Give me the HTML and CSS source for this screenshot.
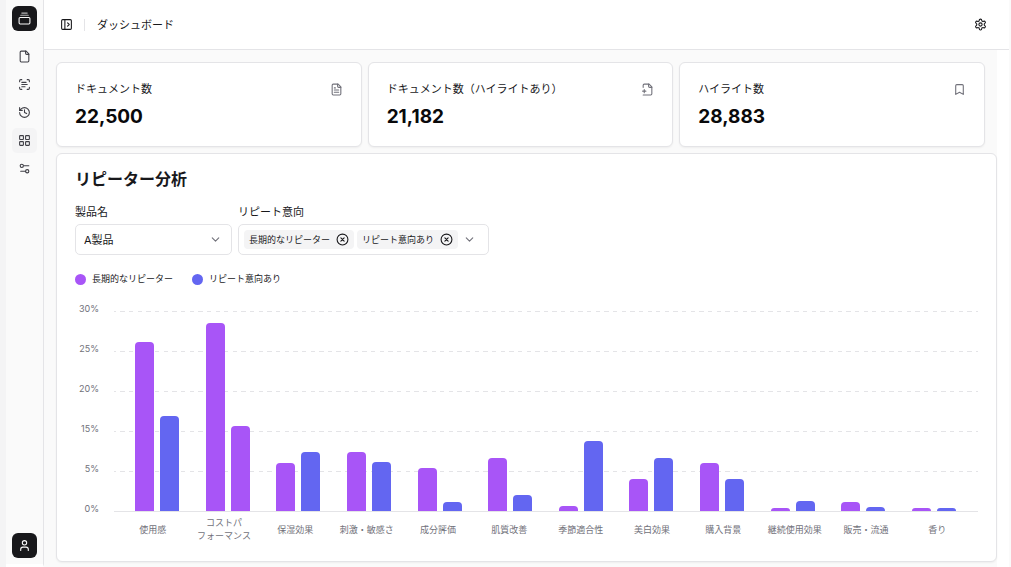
FILE: index.html
```html
<!DOCTYPE html>
<html lang="ja">
<head>
<meta charset="utf-8">
<title>ダッシュボード</title>
<link rel="stylesheet" href="styles.css">
</head>
<body>
<div class="app">
  <aside class="sidebar">
    <a class="tile" href="#" aria-label="ホーム"><svg class="icon" viewBox="0 0 24 24"><path opacity=".7" d="M7 2h10M5 6h14"/><rect x="2" y="10" width="20" height="12" rx="2"/></svg></a>
    <nav class="nav" aria-label="メイン">
      <a class="nav-item" href="#" aria-label="ドキュメント"><svg class="icon" viewBox="0 0 24 24"><path d="M15 2H6a2 2 0 0 0-2 2v16a2 2 0 0 0 2 2h12a2 2 0 0 0 2-2V7Z"/><path d="M14 2v4a2 2 0 0 0 2 2h4"/></svg></a>
      <a class="nav-item" href="#" aria-label="スキャン"><svg class="icon" viewBox="0 0 24 24"><path d="M3 7V5a2 2 0 0 1 2-2h2M17 3h2a2 2 0 0 1 2 2v2M21 17v2a2 2 0 0 1-2 2h-2M7 21H5a2 2 0 0 1-2-2v-2M7 8h8M7 12h10M7 16h6"/></svg></a>
      <a class="nav-item" href="#" aria-label="履歴"><svg class="icon" viewBox="0 0 24 24"><path d="M3 12a9 9 0 1 0 9-9 9.75 9.75 0 0 0-6.74 2.74L3 8"/><path d="M3 3v5h5M12 7v5l4 2"/></svg></a>
      <a class="nav-item active" href="#" aria-label="ダッシュボード"><svg class="icon" viewBox="0 0 24 24"><rect x="3" y="3" width="7" height="7" rx="1"/><rect x="14" y="3" width="7" height="7" rx="1"/><rect x="14" y="14" width="7" height="7" rx="1"/><rect x="3" y="14" width="7" height="7" rx="1"/></svg></a>
      <a class="nav-item" href="#" aria-label="設定"><svg class="icon" viewBox="0 0 24 24"><path d="M20 7h-9M14 17H5"/><circle cx="17" cy="17" r="3"/><circle cx="7" cy="7" r="3"/></svg></a>
    </nav>
    <button class="tile" type="button" aria-label="アカウント"><svg class="icon" viewBox="0 0 24 24"><path d="M19 21v-2a4 4 0 0 0-4-4H9a4 4 0 0 0-4 4v2"/><circle cx="12" cy="7" r="4"/></svg></button>
  </aside>

  <div class="main">
    <header class="header">
      <button class="icon-button" type="button" aria-label="サイドバーを開く"><svg class="icon" viewBox="0 0 24 24"><rect x="3" y="3" width="18" height="18" rx="2"/><path d="M9 3v18M14 9l3 3-3 3"/></svg></button>
      <span class="separator"></span>
      <h1 class="page-title">ダッシュボード</h1>
      <button class="icon-button settings" type="button" aria-label="設定"><svg class="icon" viewBox="0 0 24 24"><path d="M12.22 2h-.44a2 2 0 0 0-2 2v.18a2 2 0 0 1-1 1.73l-.43.25a2 2 0 0 1-2 0l-.15-.08a2 2 0 0 0-2.73.73l-.22.38a2 2 0 0 0 .73 2.73l.15.1a2 2 0 0 1 1 1.72v.51a2 2 0 0 1-1 1.74l-.15.09a2 2 0 0 0-.73 2.73l.22.38a2 2 0 0 0 2.73.73l.15-.08a2 2 0 0 1 2 0l.43.25a2 2 0 0 1 1 1.73V20a2 2 0 0 0 2 2h.44a2 2 0 0 0 2-2v-.18a2 2 0 0 1 1-1.73l.43-.25a2 2 0 0 1 2 0l.15.08a2 2 0 0 0 2.73-.73l.22-.39a2 2 0 0 0-.73-2.73l-.15-.08a2 2 0 0 1-1-1.74v-.5a2 2 0 0 1 1-1.74l.15-.09a2 2 0 0 0 .73-2.73l-.22-.38a2 2 0 0 0-2.73-.73l-.15.08a2 2 0 0 1-2 0l-.43-.25a2 2 0 0 1-1-1.73V4a2 2 0 0 0-2-2z"/><circle cx="12" cy="12" r="3"/></svg></button>
    </header>

    <main class="content">
      <section class="stats">
        <article class="card stat">
          <div class="stat-head"><h2 class="stat-label">ドキュメント数</h2><svg class="icon muted" viewBox="0 0 24 24"><path d="M15 2H6a2 2 0 0 0-2 2v16a2 2 0 0 0 2 2h12a2 2 0 0 0 2-2V7Z"/><path d="M14 2v4a2 2 0 0 0 2 2h4M10 9H8M16 13H8M16 17H8"/></svg></div>
          <p class="stat-value">22,500</p>
        </article>
        <article class="card stat">
          <div class="stat-head"><h2 class="stat-label">ドキュメント数（ハイライトあり）</h2><svg class="icon muted" viewBox="0 0 24 24"><path d="M4 22h14a2 2 0 0 0 2-2V7l-5-5H6a2 2 0 0 0-2 2v4"/><path d="M14 2v4a2 2 0 0 0 2 2h4M3 15h6M6 12v6"/></svg></div>
          <p class="stat-value">21,182</p>
        </article>
        <article class="card stat">
          <div class="stat-head"><h2 class="stat-label">ハイライト数</h2><svg class="icon muted" viewBox="0 0 24 24"><path d="m19 21-7-4-7 4V5a2 2 0 0 1 2-2h10a2 2 0 0 1 2 2Z"/></svg></div>
          <p class="stat-value">28,883</p>
        </article>
      </section>

      <section class="card panel">
        <h2 class="panel-title">リピーター分析</h2>
        <div class="filters">
          <div class="field product">
            <label class="field-label" for="product">製品名</label>
            <div class="control">
              <select class="select" id="product"><option>A製品</option></select>
              <svg class="icon chevron" viewBox="0 0 24 24"><path d="m6 9 6 6 6-6"/></svg>
            </div>
          </div>
          <div class="field">
            <span class="field-label" id="intent">リピート意向</span>
            <div class="control tags" role="group" aria-labelledby="intent">
              <span class="tag">長期的なリピーター<button class="tag-remove" type="button" aria-label="長期的なリピーターを削除"><svg class="icon" viewBox="0 0 24 24"><circle cx="12" cy="12" r="10"/><path d="m15 9-6 6M9 9l6 6"/></svg></button></span>
              <span class="tag">リピート意向あり<button class="tag-remove" type="button" aria-label="リピート意向ありを削除"><svg class="icon" viewBox="0 0 24 24"><circle cx="12" cy="12" r="10"/><path d="m15 9-6 6M9 9l6 6"/></svg></button></span>
              <button class="open" type="button" aria-label="選択肢を開く"><svg class="icon" viewBox="0 0 24 24"><path d="m6 9 6 6 6-6"/></svg></button>
            </div>
          </div>
        </div>

        <ul class="legend">
          <li class="legend-item"><span class="dot violet"></span>長期的なリピーター</li>
          <li class="legend-item"><span class="dot indigo"></span>リピート意向あり</li>
        </ul>

        <div class="chart">
          <div class="y-axis"><span>30%</span><span>25%</span><span>20%</span><span>15%</span><span>5%</span><span>0%</span></div>
          <div class="plot">
            <div class="grid-lines"><i></i><i></i><i></i><i></i><i></i><i></i></div>
            <div class="bars">
              <div class="group"><b class="bar violet" style="height:84.5%"></b><b class="bar indigo" style="height:47.5%"></b></div>
              <div class="group"><b class="bar violet" style="height:94%"></b><b class="bar violet" style="height:42.5%"></b></div>
              <div class="group"><b class="bar violet" style="height:24%"></b><b class="bar indigo" style="height:29.5%"></b></div>
              <div class="group"><b class="bar violet" style="height:29.5%"></b><b class="bar indigo" style="height:24.5%"></b></div>
              <div class="group"><b class="bar violet" style="height:21.5%"></b><b class="bar indigo" style="height:4.5%"></b></div>
              <div class="group"><b class="bar violet" style="height:26.5%"></b><b class="bar indigo" style="height:8%"></b></div>
              <div class="group"><b class="bar violet" style="height:2.5%"></b><b class="bar indigo" style="height:35%"></b></div>
              <div class="group"><b class="bar violet" style="height:16%"></b><b class="bar indigo" style="height:26.5%"></b></div>
              <div class="group"><b class="bar violet" style="height:24%"></b><b class="bar indigo" style="height:16%"></b></div>
              <div class="group"><b class="bar violet" style="height:1.5%"></b><b class="bar indigo" style="height:5%"></b></div>
              <div class="group"><b class="bar violet" style="height:4.5%"></b><b class="bar indigo" style="height:2%"></b></div>
              <div class="group"><b class="bar violet" style="height:1.5%"></b><b class="bar indigo" style="height:1.5%"></b></div>
            </div>
          </div>
          <div class="x-axis">
            <span>使用感</span><span>コストパ<br>フォーマンス</span><span>保湿効果</span><span>刺激・敏感さ</span><span>成分評価</span><span>肌質改善</span><span>季節適合性</span><span>美白効果</span><span>購入背景</span><span>継続使用効果</span><span>販売・流通</span><span>香り</span>
          </div>
        </div>
      </section>
    </main>
  </div>
</div>
</body>
</html>
```
FILE: styles.css
```css
* { box-sizing: border-box; }

body {
  margin: 0;
  background: #fff;
  color: #18181b;
  font-family: Inter, "Noto Sans CJK JP", sans-serif;
  font-size: 11px;
  line-height: 16px;
}

h1, h2, p, ul { margin: 0; padding: 0; font-weight: 400; }
button { border: 0; padding: 0; background: none; color: inherit; font: inherit; }

.app {
  display: flex;
  min-height: 100vh;
  border-left: 6px solid #f4f4f5;
  border-right: 2px solid #fafafa;
}

.icon {
  display: block;
  flex: none;
  width: 13px;
  height: 13px;
  fill: none;
  stroke: currentColor;
  stroke-width: 2;
  stroke-linecap: round;
  stroke-linejoin: round;
}
.muted { color: #71717a; }

/* Sidebar */
.sidebar {
  display: flex;
  flex-direction: column;
  align-items: center;
  gap: 13px;
  width: 38px;
  padding: 6px 0;
  border-right: 1px solid #e4e4e7;
  border-bottom: 3px solid #fff;
  background: #fafafa;
}
.tile, .nav-item {
  display: grid;
  place-items: center;
  width: 25px;
  height: 25px;
  border-radius: 6px;
}
.tile { background: #18181b; color: #fafafa; }
.nav { display: grid; gap: 3px; margin-bottom: auto; }
.nav-item { color: #3f3f46; border-radius: 5px; }
.nav-item.active { background: #f4f4f5; }

/* Header */
.main { display: flex; flex: 1; flex-direction: column; min-width: 0; }
.header {
  display: flex;
  align-items: center;
  height: 50px;
  padding: 0 22px 0 16px;
  border-bottom: 1px solid #e4e4e7;
}
.separator { width: 1px; height: 12px; margin: 0 12px 0 11px; background: #e4e4e7; }
.page-title { font-size: 11px; }
.settings { margin-left: auto; }

/* Content */
.content {
  display: flex;
  flex: 1;
  flex-direction: column;
  gap: 6px;
  margin-right: 12px;
  padding: 12px 0 5px 12px;
  background: #fafafa;
}
.card {
  border: 1px solid #e4e4e7;
  border-radius: 6px;
  background: #fff;
  box-shadow: 0 1px 2px rgb(0 0 0 / 5%);
}
.stats {
  display: grid;
  grid-template-columns: repeat(3, 1fr);
  gap: 6px;
  padding-right: 12px;
}
.stat { padding: 18px 18px 15px; }
.stat-head { display: flex; align-items: center; justify-content: space-between; }
.stat-label { font-size: 11px; }
.stat-value {
  margin-top: 6px;
  color: #09090b;
  font-size: 19px;
  font-weight: 700;
  line-height: 28px;
}

/* Analysis panel */
.panel { flex: 1; padding: 13px 18px 16px; }
.panel-title { font-size: 16px; font-weight: 700; line-height: 24px; }
.filters { display: flex; gap: 6px; margin-top: 13px; }
.field-label { display: block; margin-bottom: 4px; }
.product { width: 157px; }
.control {
  display: grid;
  align-items: center;
  height: 31px;
  border: 1px solid #e4e4e7;
  border-radius: 5px;
}
.select {
  grid-area: 1 / 1;
  width: 100%;
  height: 100%;
  padding: 0 8px;
  border: 0;
  background: none;
  color: inherit;
  font: inherit;
  appearance: none;
}
.chevron {
  grid-area: 1 / 1;
  justify-self: end;
  margin-right: 9px;
  color: #71717a;
  pointer-events: none;
}
.tags { display: flex; gap: 3px; padding: 0 12px 0 5px; }
.tag {
  display: flex;
  align-items: center;
  gap: 6px;
  height: 19px;
  padding: 0 5px;
  border-radius: 4px;
  background: #f4f4f5;
  font-size: 9px;
}
.open { margin-left: 2px; color: #71717a; }

.legend { display: flex; gap: 19px; margin-top: 16px; list-style: none; font-size: 9px; }
.legend-item { display: flex; align-items: center; gap: 6px; }
.dot { width: 11px; height: 11px; border-radius: 50%; }
.violet { background: #a855f7; }
.indigo { background: #6366f1; }

/* Bar chart */
.chart {
  display: grid;
  grid-template-columns: 24px 1fr;
  column-gap: 15px;
  margin-top: 24px;
  color: #71717a;
  font-size: 9px;
  line-height: 13px;
}
.y-axis {
  display: flex;
  flex-direction: column;
  justify-content: space-between;
  height: 213px;
  margin: -9px 0 -4px;
  text-align: right;
}
.plot { display: grid; height: 201px; }
.grid-lines {
  grid-area: 1 / 1;
  display: flex;
  flex-direction: column;
  justify-content: space-between;
}
.grid-lines i {
  height: 1px;
  background: repeating-linear-gradient(90deg, #e4e4e7 0 0.25%, transparent 0.25% 0.75%, #e4e4e7 0.75% 1%);
}
.grid-lines i:last-child { background: #e4e4e7; }
.bars {
  grid-area: 1 / 1;
  display: flex;
  justify-content: space-between;
  height: 200px;
  padding: 0 22px 0 21px;
}
.group { display: flex; align-items: flex-end; gap: 6px; }
.bar { width: 19px; border-radius: 4px 4px 0 0; }
.x-axis {
  grid-column: 2;
  display: grid;
  grid-template-columns: repeat(12, 1fr);
  align-items: center;
  margin-top: 4px;
  padding: 0 5px 0 3px;
  text-align: center;
  white-space: nowrap;
}
```
